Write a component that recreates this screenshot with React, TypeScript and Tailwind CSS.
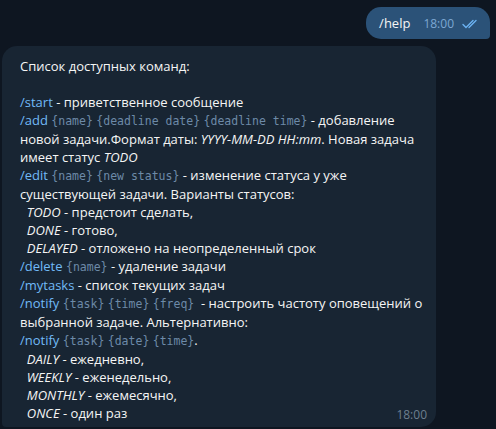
import React from "react";

const Cmd = ({ children }: { children: React.ReactNode }) => (
  <span className="text-[#71baf7]">{children}</span>
);

const Arg = ({ children }: { children: React.ReactNode }) => (
  <span className="font-['DejaVu_Sans_Mono',monospace] text-[11.5px] text-[#6d8aa8]">
    {"{"}
    {children}
    {"}"}
  </span>
);

export default function App() {
  return (
    <div className="w-[496px] h-[429px] bg-[#0e1621] font-['Open_Sans',sans-serif] text-[13px] leading-[18px] text-[#f5f5f5] overflow-hidden">
      {/* outgoing */}
      <div className="flex justify-end pt-[7px] pr-[6px]">
        <div className="flex items-end gap-[13px] h-[32px] bg-[#2b5278] rounded-[15px] rounded-br-[4px] pl-[13px] pr-[10px] pb-[6px]">
          <span className="mb-[1px]">/help</span>
          <span className="flex items-center gap-[8px] text-[12px] text-[#7da8d3]">
            18:00
            <svg width="18" height="10" viewBox="0 0 18 10" fill="none" stroke="#6bb2f2" strokeWidth="1.4" strokeLinecap="round">
              <path d="M1 5.5 L4 8.5 L11 1.5" />
              <path d="M7 8.5 L14 1.5" />
            </svg>
          </span>
        </div>
      </div>

      {/* incoming */}
      <div className="pl-[2px] pt-[7px]">
        <div className="w-[434px] bg-[#182533] rounded-[15px] rounded-bl-[4px] pl-[18px] pr-[9px] pt-[11px] pb-[5px]">
          <div>Список доступных команд:</div>
          <div>&nbsp;</div>
          <div>
            <Cmd>/start</Cmd> - приветственное сообщение
          </div>
          <div>
            <Cmd>/add</Cmd> <Arg>name</Arg> <Arg>deadline date</Arg> <Arg>deadline time</Arg> - добавление
          </div>
          <div>
            новой задачи.Формат даты: <i>YYYY-MM-DD HH:mm</i>. Новая задача
          </div>
          <div>
            имеет статус <i>TODO</i>
          </div>
          <div>
            <Cmd>/edit</Cmd> <Arg>name</Arg> <Arg>new status</Arg> - изменение статуса у уже
          </div>
          <div>существующей задачи. Варианты статусов:</div>
          <div>
            &nbsp;&nbsp;<i>TODO</i> - предстоит сделать,
          </div>
          <div>
            &nbsp;&nbsp;<i>DONE</i> - готово,
          </div>
          <div>
            &nbsp;&nbsp;<i>DELAYED</i> - отложено на неопределенный срок
          </div>
          <div>
            <Cmd>/delete</Cmd> <Arg>name</Arg> - удаление задачи
          </div>
          <div>
            <Cmd>/mytasks</Cmd> - список текущих задач
          </div>
          <div>
            <Cmd>/notify</Cmd> <Arg>task</Arg> <Arg>time</Arg> <Arg>freq</Arg>&nbsp; - настроить частоту оповещений о
          </div>
          <div>выбранной задаче. Альтернативно:</div>
          <div>
            <Cmd>/notify</Cmd> <Arg>task</Arg> <Arg>date</Arg> <Arg>time</Arg>.
          </div>
          <div>
            &nbsp;&nbsp;<i>DAILY</i> - ежедневно,
          </div>
          <div>
            &nbsp;&nbsp;<i>WEEKLY</i> - еженедельно,
          </div>
          <div>
            &nbsp;&nbsp;<i>MONTHLY</i> - ежемесячно,
          </div>
          <div className="flex justify-between items-end">
            <span>
              &nbsp;&nbsp;<i>ONCE</i> - один раз
            </span>
            <span className="text-[12px] text-[#6d7f8f] translate-y-[2px]">18:00</span>
          </div>
        </div>
      </div>
    </div>
  );
}
